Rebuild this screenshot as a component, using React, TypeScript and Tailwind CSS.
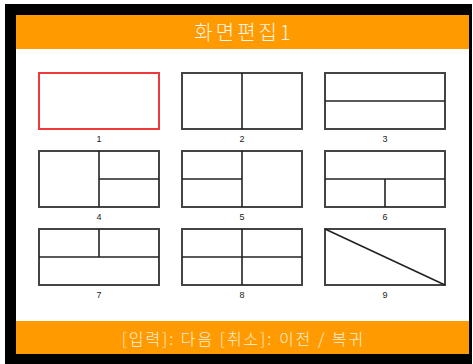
type Layout = 'none' | 'v' | 'h' | 'vRightH' | 'vLeftH' | 'hBottomV' | 'hTopV' | 'quad' | 'diag';

const layouts: Layout[] = ['none', 'v', 'h', 'vRightH', 'vLeftH', 'hBottomV', 'hTopV', 'quad', 'diag'];

const W = 122;
const H = 58;

function Thumb({ kind, selected }: { kind: Layout; selected: boolean }) {
  const mx = W / 2;
  const my = H / 2;
  const line = '#222';
  return (
    <svg width={W} height={H} viewBox={`0 0 ${W} ${H}`} className="block">
      <rect
        x={1}
        y={1}
        width={W - 2}
        height={H - 2}
        fill="white"
        stroke={selected ? '#ee3a3a' : '#444'}
        strokeWidth={2}
      />
      {(kind === 'v' || kind === 'vRightH' || kind === 'vLeftH' || kind === 'quad') && (
        <line x1={mx} y1={1} x2={mx} y2={H - 1} stroke={line} strokeWidth={1.6} />
      )}
      {(kind === 'h' || kind === 'hBottomV' || kind === 'hTopV' || kind === 'quad') && (
        <line x1={1} y1={my} x2={W - 1} y2={my} stroke={line} strokeWidth={1.6} />
      )}
      {kind === 'vRightH' && <line x1={mx} y1={my} x2={W - 1} y2={my} stroke={line} strokeWidth={1.6} />}
      {kind === 'vLeftH' && <line x1={1} y1={my} x2={mx} y2={my} stroke={line} strokeWidth={1.6} />}
      {kind === 'hBottomV' && <line x1={mx} y1={my} x2={mx} y2={H - 1} stroke={line} strokeWidth={1.6} />}
      {kind === 'hTopV' && <line x1={mx} y1={1} x2={mx} y2={my} stroke={line} strokeWidth={1.6} />}
      {kind === 'diag' && <line x1={1} y1={1} x2={W - 1} y2={H - 1} stroke={line} strokeWidth={1.6} />}
    </svg>
  );
}

export default function App() {
  return (
    <div className="h-[364px] w-[473px] overflow-hidden bg-white pl-[5px] pt-[4px] [font-family:'Noto_Sans_CJK_KR','Noto_Sans',sans-serif]">
      <div className="h-[360px] w-[467px] bg-black pb-[10px] pl-[11px] pr-[3px] pt-[11px]">
        <div className="flex h-[339px] w-[453px] flex-col bg-white">
          <div className="flex h-[34px] items-center justify-center bg-[#ff9b00] pl-[3px] text-[20px] font-light tracking-[3px] text-[#fff4e4]">
            화면편집1
          </div>
          <div className="flex-1 pl-[22px] pt-[23px]">
            <div className="grid grid-cols-[122px_122px_122px] gap-x-[21px]">
              {layouts.map((k, i) => (
                <div key={k} className="flex flex-col">
                  <Thumb kind={k} selected={i === 0} />
                  <div className="h-[20px] pt-[4px] text-center text-[9px] leading-[10px] text-[#222] [font-family:'Liberation_Sans',sans-serif]">
                    {i + 1}
                  </div>
                </div>
              ))}
            </div>
          </div>
          <div className="flex h-[33px] items-center justify-center bg-[#ff9b00] pl-[2px] text-[16px] font-light tracking-[2px] text-[#fff0d8]">
            [입력]: 다음 [취소]: 이전 / 복귀
          </div>
        </div>
      </div>
    </div>
  );
}
